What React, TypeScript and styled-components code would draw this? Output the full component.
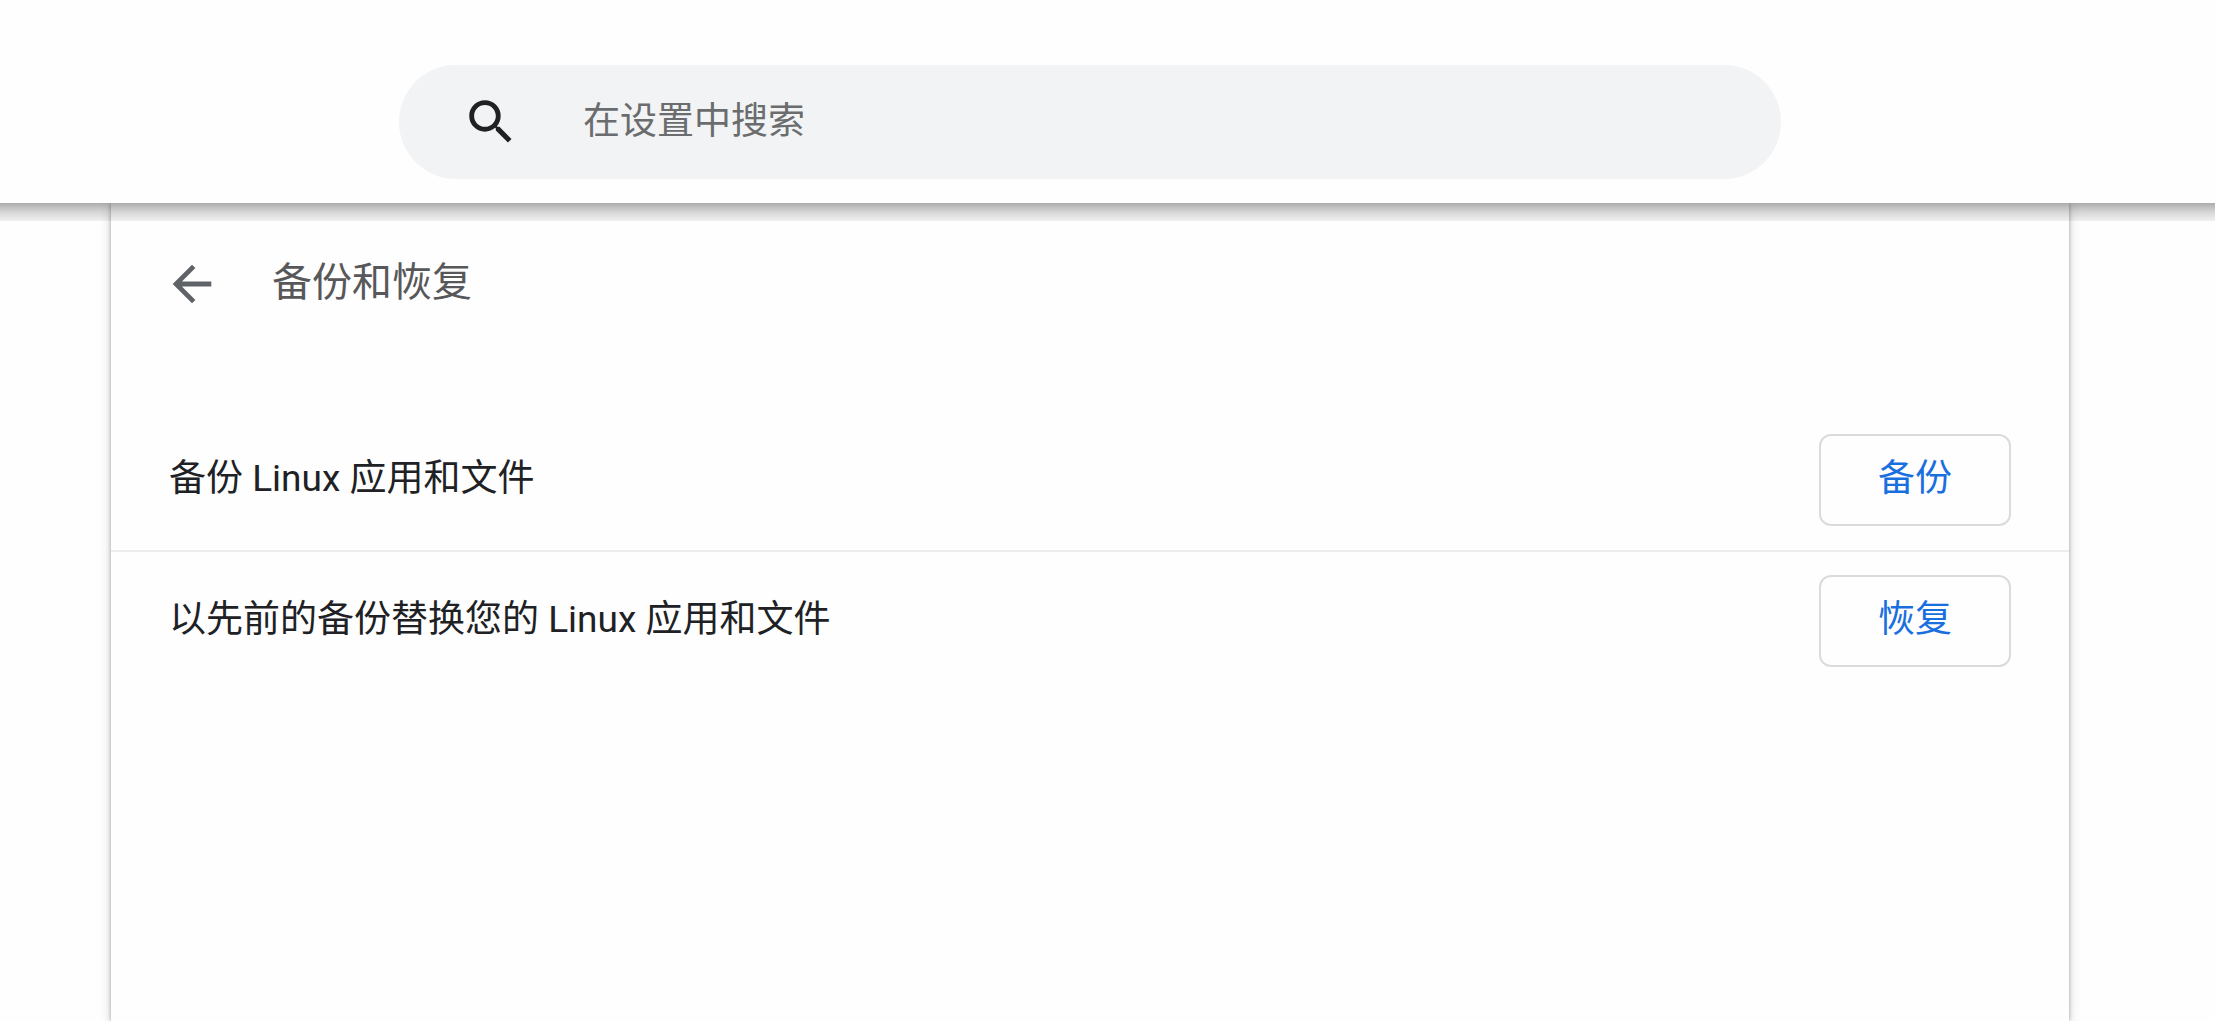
import React from "react";
import styled, { createGlobalStyle } from "styled-components";

const GlobalStyle = createGlobalStyle`
  *, *::before, *::after { box-sizing: border-box; }
  html, body { margin: 0; }
  body {
    background: #fefefe;
    color: #202124;
    font: 400 37px/56px Roboto, "Noto Sans CJK SC", sans-serif;
  }
  button, input { font: inherit; }
`;

const Page = styled.div`
  min-height: 100vh;
  display: flex;
  flex-direction: column;
  overflow: hidden;
`;

const Header = styled.header`
  position: relative;
  display: flex;
  justify-content: center;
  padding: 65px 35px 24px 0;
  background: #fefefe;

  &::after {
    content: "";
    position: absolute;
    top: 100%;
    left: 0;
    right: 0;
    height: 18px;
    background: linear-gradient(rgba(0, 0, 0, 0.32), rgba(0, 0, 0, 0.16) 50%, rgba(0, 0, 0, 0.05));
    pointer-events: none;
  }
`;

const SearchBox = styled.label`
  display: flex;
  align-items: center;
  gap: 63px;
  width: 1382px;
  max-width: 100%;
  height: 114px;
  padding: 0 63px;
  border-radius: 57px;
  background: #f1f3f4;
`;

const SearchInput = styled.input`
  flex: 1;
  min-width: 0;
  padding: 0;
  border: 0;
  outline: 0;
  background: transparent;
  color: #202124;
  &::placeholder { color: #6b6c6e; opacity: 1; }
`;

const Icon = styled.svg`
  display: block;
  flex: none;
  width: 58px;
  height: 58px;
  fill: currentColor;
`;

const Main = styled.main`
  flex: 1;
  display: flex;
  justify-content: center;
  padding-right: 35px;
`;

const Panel = styled.section`
  width: 1958px;
  max-width: 100%;
  background: #fefefe;
  box-shadow: 0 0 4px rgba(0, 0, 0, 0.32), 0 2px 12px rgba(0, 0, 0, 0.15);
`;

const TitleBar = styled.div`
  display: flex;
  align-items: center;
  gap: 51px;
  height: 162px;
  padding: 0 52px;
  margin-bottom: 45px;
`;

const BackButton = styled.button`
  padding: 0;
  border: 0;
  background: none;
  color: #5f6368;
  cursor: pointer;
`;

const Title = styled.h1`
  margin: 0;
  padding-bottom: 2px;
  color: #58585a;
  font-size: 40px;
  font-weight: 400;
`;

const Row = styled.div`
  display: flex;
  align-items: center;
  justify-content: space-between;
  padding: 24px 58px;
  & + & {
    padding-top: 23px;
    border-top: 2px solid #ededed;
  }
`;

const RowLabel = styled.div`
  padding-bottom: 2px;
`;

const ActionButton = styled.button`
  width: 192px;
  height: 92px;
  padding: 0 0 2px;
  border: 2px solid #dadcdc;
  border-radius: 12px;
  background: #fefefe;
  color: #1a6fdf;
  cursor: pointer;
`;

const rows = [
  { label: "备份 Linux 应用和文件", action: "备份" },
  { label: "以先前的备份替换您的 Linux 应用和文件", action: "恢复" },
];

export default function App() {
  return (
    <Page lang="zh-CN">
      <GlobalStyle />
      <Header>
        <SearchBox>
          <Icon viewBox="0 0 24 24" aria-hidden="true">
            <path d="M15.5 14h-.79l-.28-.27A6.471 6.471 0 0 0 16 9.5 6.5 6.5 0 1 0 9.5 16c1.61 0 3.09-.59 4.23-1.57l.27.28v.79l5 4.99L20.49 19l-4.99-5zm-6 0C7.01 14 5 11.99 5 9.5S7.01 5 9.5 5 14 7.01 14 9.5 11.99 14 9.5 14z" />
          </Icon>
          <SearchInput type="text" placeholder="在设置中搜索" aria-label="在设置中搜索" />
        </SearchBox>
      </Header>
      <Main>
        <Panel>
          <TitleBar>
            <BackButton type="button" aria-label="返回">
              <Icon viewBox="0 0 24 24" aria-hidden="true">
                <path d="M20 11H7.83l5.59-5.59L12 4l-8 8 8 8 1.41-1.41L7.83 13H20v-2z" />
              </Icon>
            </BackButton>
            <Title>备份和恢复</Title>
          </TitleBar>
          {rows.map(({ label, action }) => (
            <Row key={action}>
              <RowLabel>{label}</RowLabel>
              <ActionButton type="button">{action}</ActionButton>
            </Row>
          ))}
        </Panel>
      </Main>
    </Page>
  );
}
